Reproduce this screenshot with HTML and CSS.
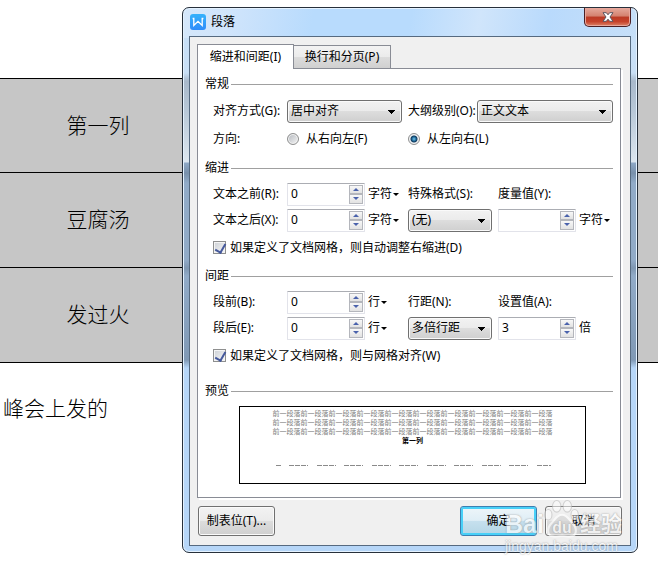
FILE: index.html
```html
<!DOCTYPE html>
<html lang="zh-CN">
<head>
<meta charset="utf-8">
<title>段落</title>
<link rel="stylesheet" href="styles.css">
</head>
<body>
<main class="document">
  <table class="doc-table">
    <tr class="first"><td>第一列</td><td></td></tr>
    <tr><td>豆腐汤</td><td></td></tr>
    <tr><td>发过火</td><td></td></tr>
  </table>
  <p class="doc-text">峰会上发的</p>
</main>

<form class="dialog" role="dialog" aria-labelledby="dialog-title">
  <header class="titlebar">
    <svg class="app-icon" viewBox="0 0 16 16" aria-hidden="true">
      <defs><linearGradient id="logo" x1="0" y1="0" x2="0" y2="1"><stop offset="0" stop-color="#35b2fb"/><stop offset="1" stop-color="#2f8dfa"/></linearGradient></defs>
      <rect width="16" height="16" rx="3" fill="url(#logo)"/>
      <path d="M2.600 4.500h1.200v7l4.200-4.200 4.200 4.200v-7h1.200" fill="none" stroke="#fff" stroke-width="1.300"/>
    </svg>
    <h1 id="dialog-title">段落</h1>
    <button class="close" type="button" aria-label="关闭">
      <svg viewBox="0 0 12 10" aria-hidden="true"><path d="M1 .7h3.300L6 2.800 7.700.7H11L8 5l3 4.300H7.700L6 7.200 4.300 9.300H1L4 5z" fill="#fff" stroke="#5b5560" stroke-width="1"/></svg>
    </button>
  </header>

  <div class="client">
    <div class="tabs" role="tablist">
      <button class="tab active" type="button" role="tab" aria-selected="true">缩进和间距(I)</button>
      <button class="tab" type="button" role="tab" aria-selected="false">换行和分页(P)</button>
    </div>

    <div class="panel" role="tabpanel">
      <section class="group">
        <h2>常规</h2>
        <div class="grid tall">
          <label for="align">对齐方式(G):</label>
          <div class="span2"><select id="align" class="wide"><option>居中对齐</option></select></div>
          <div class="span3 outline"><label for="level">大纲级别(O):</label><select id="level"><option>正文文本</option></select></div>
          <span>方向:</span>
          <label class="span2 choice"><input type="radio" name="dir">从右向左(F)</label>
          <label class="span3 choice"><input type="radio" name="dir" checked>从左向右(L)</label>
        </div>
      </section>

      <section class="group">
        <h2>缩进</h2>
        <div class="grid">
          <label for="before">文本之前(R):</label>
          <div class="spin"><input id="before" type="text" value="0"><span class="steps"><button type="button" class="up" aria-label="增加"></button><button type="button" class="down" aria-label="减少"></button></span></div>
          <button class="unit" type="button">字符</button>
          <label for="special">特殊格式(S):</label>
          <label class="span2" for="measure">度量值(Y):</label>

          <label for="after">文本之后(X):</label>
          <div class="spin"><input id="after" type="text" value="0"><span class="steps"><button type="button" class="up" aria-label="增加"></button><button type="button" class="down" aria-label="减少"></button></span></div>
          <button class="unit" type="button">字符</button>
          <div class="field"><select id="special"><option>(无)</option></select></div>
          <div class="spin"><input id="measure" type="text" value=""><span class="steps"><button type="button" class="up" aria-label="增加"></button><button type="button" class="down" aria-label="减少"></button></span></div>
          <button class="unit" type="button">字符</button>

          <label class="full check"><input type="checkbox" checked>如果定义了文档网格，则自动调整右缩进(D)</label>
        </div>
      </section>

      <section class="group">
        <h2>间距</h2>
        <div class="grid">
          <label for="pbefore">段前(B):</label>
          <div class="spin"><input id="pbefore" type="text" value="0"><span class="steps"><button type="button" class="up" aria-label="增加"></button><button type="button" class="down" aria-label="减少"></button></span></div>
          <button class="unit" type="button">行</button>
          <label for="spacing">行距(N):</label>
          <label class="span2" for="setting">设置值(A):</label>

          <label for="pafter">段后(E):</label>
          <div class="spin"><input id="pafter" type="text" value="0"><span class="steps"><button type="button" class="up" aria-label="增加"></button><button type="button" class="down" aria-label="减少"></button></span></div>
          <button class="unit" type="button">行</button>
          <div class="field"><select id="spacing"><option>多倍行距</option></select></div>
          <div class="spin"><input id="setting" type="text" value="3"><span class="steps"><button type="button" class="up" aria-label="增加"></button><button type="button" class="down" aria-label="减少"></button></span></div>
          <span>倍</span>

          <label class="full check"><input type="checkbox" checked>如果定义了文档网格，则与网格对齐(W)</label>
        </div>
      </section>

      <section class="group last">
        <h2>预览</h2>
        <div class="preview">
          <p>前一段落前一段落前一段落前一段落前一段落前一段落前一段落前一段落前一段落前一段落</p>
          <p>前一段落前一段落前一段落前一段落前一段落前一段落前一段落前一段落前一段落前一段落</p>
          <p>前一段落前一段落前一段落前一段落前一段落前一段落前一段落前一段落前一段落前一段落</p>
          <p class="current">第一列</p>
          <svg class="next-lines" viewBox="0 0 276 2" aria-hidden="true"><path d="M1 .5H6M14 .5H33M42 .5H61M69 .5H88M97 .5H116M124 .5H143M152 .5H171M179 .5H198M207 .5H226M234 .5H253M262 .5H276" stroke="#8a8a8a" stroke-width="1" stroke-dasharray="5 1"/></svg>
        </div>
      </section>
    </div>

    <footer class="actions">
      <button type="button">制表位(T)...</button>
      <button class="default" type="submit">确定</button>
      <button type="button">取消</button>
    </footer>
  </div>
</form>

<div class="watermark">
  <div class="brand">
    <span>Bai</span>
    <svg viewBox="0 0 34 36" aria-hidden="true">
      <g fill="#fff" fill-opacity=".8" stroke="#c0c0c0" stroke-width="1">
        <ellipse cx="12" cy="6" rx="4" ry="5.500"/><ellipse cx="22" cy="6" rx="4" ry="5.500"/>
        <ellipse cx="4" cy="14" rx="3.500" ry="5"/><ellipse cx="29" cy="14" rx="3.500" ry="5"/>
        <path d="M17 14c5 0 7 5 10 8 4 4 5 12-2 12.500-3 .3-5-.5-8-.5s-5 .8-8 .5C2 34 3 26 7 22c3-3 5-8 10-8z" fill="#cfcfcf" stroke="#fff" stroke-width="2"/>
      </g>
      <text x="17" y="31" text-anchor="middle">du</text>
    </svg>
    <span class="cn">经验</span>
  </div>
  <div class="site">jingyan.baidu.com</div>
</div>
</body>
</html>
```

FILE: styles.css
```css
* { box-sizing: border-box; }

body {
  margin: 0;
  min-height: 100vh;
  background: #fff;
  color: #000;
  font: 12px/16px "Noto Sans", "Noto Sans CJK SC", sans-serif;
  overflow: hidden;
}

button, input, select { font: inherit; color: inherit; margin: 0; }
h1, h2, p { margin: 0; font-size: inherit; font-weight: inherit; }
h1, h2 { font-weight: normal; }

/* Document behind the dialog */
.document {
  padding-top: 78px;
  font: 300 21px/30px "Noto Sans CJK SC", sans-serif;
}
.doc-table {
  width: 100%;
  border-spacing: 0;
  background: #c6c6c6;
  border-bottom: 1px solid #000;
  table-layout: fixed;
}
.doc-table td {
  height: 95px;
  padding: 0 0 4px;
  border-top: 1px solid #000;
  text-align: center;
}
.doc-table td:first-child { width: 196px; }
.doc-table .first td { height: 94px; }
.doc-text { padding: 29px 3px; }

/* Dialog frame */
.dialog {
  position: absolute;
  top: 7px;
  left: 182px;
  right: 20px;
  padding: 0 6px 6px;
  border: 1px solid #27303b;
  border-radius: 7px;
  box-shadow: inset 0 0 0 1px #e4f2ff;
  background:
    linear-gradient(100deg, #d5e7fa 0, #cfe4fb 50px, #b8dbfd 130px, #b8dbfd 50%, #d0e5fb 65%, #b9dafc 80%, #c6dff8 100%) top / 100% 30px no-repeat,
    linear-gradient(#c6dff8 0, #c9dff5 65px, #a9b9cb 73px, #b6c6d6 100px, #dce6ef 154px, #8ea8c6 155px, #7890ab 165px, #91abc8 175px, #91abc8 252px, #7f97b2 260px, #91abc8 268px, #8099b5 352px, #b6d6f8 360px, #b6d6f8 100%);
}
.titlebar {
  display: flex;
  align-items: center;
  gap: 5px;
  height: 28px;
  padding-left: 1px;
}
.app-icon { width: 16px; height: 16px; }
.titlebar h1 { flex: 1; }
.close {
  align-self: flex-start;
  display: flex;
  align-items: center;
  justify-content: center;
  width: 47px;
  height: 19px;
  padding: 0;
  border: 1px solid #4b1f24;
  border-top: 0;
  border-radius: 0 0 5px 5px;
  box-shadow: inset 0 0 0 1px #e8a79c;
  background: linear-gradient(#e5a99c 0, #d4816f 45%, #bb3a25 50%, #c6422b 75%, #dc8468 100%);
}
.close svg { width: 12px; height: 10px; }
.client {
  padding: 7px 8px 9px 7px;
  border: 1px solid #566a80;
  background: #f0f0f0;
}

/* Tabs */
.tabs { display: flex; align-items: flex-end; }
.tab {
  width: 97px;
  height: 23px;
  padding: 0;
  border: 1px solid #898c95;
  border-bottom: 0;
  border-left: 0;
  background: linear-gradient(#f3f3f3 0, #ebebeb 50%, #dcdcdc 52%, #d0d0d0 100%);
}
.tab.active {
  position: relative;
  height: 25px;
  margin-bottom: -1px;
  border-left: 1px solid #898c95;
  background: #fff;
}
.panel {
  margin-right: 1px;
  padding: 7px 7px 13px;
  border: 1px solid #898c95;
  box-shadow: 2px 2px 0 #fff;
  background: #fff;
}

/* Groups */
.group { margin-bottom: 7px; }
.group.last { margin: 14px 0 0; }
.group h2 {
  display: flex;
  align-items: center;
  gap: 2px;
  margin-bottom: 5px;
}
.group h2::after { content: ""; flex: 1; height: 1px; background: #a0a0a0; }
.grid {
  display: grid;
  grid-template-columns: 74px 81px 40px 90px 81px 1fr;
  grid-auto-rows: 26px;
  align-items: center;
  padding: 0 0 2px 8px;
  white-space: nowrap;
}
.grid.tall { grid-auto-rows: 28px; padding-bottom: 0; }
.span2 { grid-column: span 2; }
.span3 { grid-column: span 3; }
.full { grid-column: 1 / -1; margin-top: 3px; }
.span2, .span3, .field { display: flex; align-items: center; }

select {
  appearance: none;
  height: 23px;
  padding: 0 20px 0 3px;
  border: 1px solid #707070;
  border-radius: 3px;
  box-shadow: inset 0 0 0 1px #fafafa;
  background:
    linear-gradient(to bottom left, #000 50%, transparent 50%) right 9px top 9px / 4px 4px no-repeat,
    linear-gradient(to bottom right, #000 50%, transparent 50%) right 5px top 9px / 4px 4px no-repeat,
    linear-gradient(#f2f2f2 0, #ebebeb 48%, #dddddd 50%, #cfcfcf 100%);
}
.wide { width: 115px; }
.field select { width: 84px; }
.outline label { width: 69px; }
.outline select { flex: 1; }

.choice { gap: 7px; }
.choice input {
  appearance: none;
  width: 12px;
  height: 12px;
  border: 1px solid #8e8f8f;
  border-radius: 50%;
  box-shadow: inset 0 0 0 1px #f4f4f4;
  background: linear-gradient(135deg, #b4b8be, #f6f6f6);
}
.choice input:checked {
  background: radial-gradient(circle at 50% 50%, #7cc6e8 0, #1c6a9c 2px, #123a5c 3px, #e4e8ec 4px);
}
.check { display: flex; align-items: center; gap: 4px; }
.check input {
  appearance: none;
  width: 13px;
  height: 13px;
  border: 1px solid #8e8f8f;
  box-shadow: inset 0 0 0 1px #f4f4f4;
  background: linear-gradient(135deg, #cdd1d6, #f6f6f6);
}
.check input:checked::before {
  content: "";
  display: block;
  width: 5px;
  height: 9px;
  margin-left: 3px;
  border: solid #45599c;
  border-width: 0 2px 2px 0;
  transform: rotate(30deg);
}

.spin {
  display: flex;
  width: 78px;
  height: 23px;
  padding: 1px;
  border: 1px solid #e2e3ea;
  border-top-color: #abadb3;
  border-radius: 1px;
  background: #fff;
}
.spin input {
  flex: 1;
  min-width: 0;
  padding: 0 2px;
  border: 0;
  outline: 0;
  background: none;
}
.steps { display: flex; flex-direction: column; width: 14px; }
.steps button {
  display: flex;
  align-items: center;
  justify-content: center;
  flex: 1;
  padding: 0;
  border: 1px solid #b4b6bc;
  background: linear-gradient(#f8f8f8, #e2e2e2);
}
.steps button::before {
  content: "";
  border: solid transparent;
  border-width: 0 3px 3px;
  border-bottom-color: #4a62ac;
}
.steps .down::before {
  border-width: 3px 3px 0;
  border-top-color: #4a62ac;
}
.unit {
  display: flex;
  align-items: center;
  gap: 1px;
  padding: 0;
  border: 0;
  background: none;
}
.unit::after {
  content: "";
  border: solid transparent;
  border-width: 3px 3px 0;
  border-top-color: #000;
}

/* Preview */
.preview {
  height: 78px;
  margin: 7px 27px 0 34px;
  padding-top: 2px;
  border: 1px solid #000;
  text-align: center;
  white-space: nowrap;
  overflow: hidden;
  font: 7px/9px "Noto Sans CJK SC", sans-serif;
  color: #808080;
}
.preview .current { color: #000; font-weight: bold; }
.next-lines { display: block; width: 276px; height: 2px; margin: 20px auto 0; }

/* Footer buttons */
.actions { display: flex; gap: 8px; padding: 8px 0 0 1px; }
.actions button {
  width: 77px;
  height: 30px;
  padding: 0;
  border: 1px solid #707070;
  border-radius: 3px;
  box-shadow: inset 0 0 0 1px #fafafa;
  background: linear-gradient(#f2f2f2 0, #ebebeb 48%, #dddddd 50%, #cfcfcf 100%);
}
.actions .default {
  margin-left: auto;
  border-color: #3c7fb1;
  box-shadow: inset 0 0 0 2px #48d0f8;
  background: linear-gradient(#eef5f9 0, #dfeef6 48%, #c6e0ee 50%, #b4d6e6 100%);
}

/* Watermark over the lower right corner */
.watermark {
  position: absolute;
  right: 34px;
  bottom: 16px;
  width: 119px;
  opacity: .65;
  color: #fff;
  font-family: "Liberation Sans", "Noto Sans CJK SC", sans-serif;
  text-shadow: 0 0 1px #888, 0 0 2px #999;
  pointer-events: none;
}
.brand { display: flex; align-items: flex-end; font: bold 25px/28px "Liberation Sans", "Noto Sans CJK SC", sans-serif; }
.brand svg { width: 36px; height: 38px; }
.brand text { fill: #fff; font: bold 15px "Liberation Sans", sans-serif; }
.brand .cn { font-size: 21px; }
.site { font-size: 14px; line-height: 16px; }
```
